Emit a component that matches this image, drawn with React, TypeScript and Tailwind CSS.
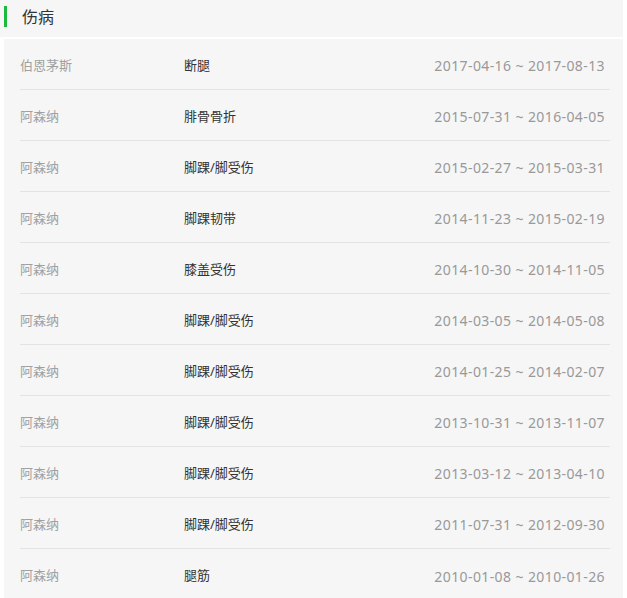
import React from "react";

const rows: [string, string, string][] = [
  ["伯恩茅斯", "断腿", "2017-04-16 ~ 2017-08-13"],
  ["阿森纳", "腓骨骨折", "2015-07-31 ~ 2016-04-05"],
  ["阿森纳", "脚踝/脚受伤", "2015-02-27 ~ 2015-03-31"],
  ["阿森纳", "脚踝韧带", "2014-11-23 ~ 2015-02-19"],
  ["阿森纳", "膝盖受伤", "2014-10-30 ~ 2014-11-05"],
  ["阿森纳", "脚踝/脚受伤", "2014-03-05 ~ 2014-05-08"],
  ["阿森纳", "脚踝/脚受伤", "2014-01-25 ~ 2014-02-07"],
  ["阿森纳", "脚踝/脚受伤", "2013-10-31 ~ 2013-11-07"],
  ["阿森纳", "脚踝/脚受伤", "2013-03-12 ~ 2013-04-10"],
  ["阿森纳", "脚踝/脚受伤", "2011-07-31 ~ 2012-09-30"],
  ["阿森纳", "腿筋", "2010-01-08 ~ 2010-01-26"],
];

export default function App() {
  return (
    <div
      className="w-[627px] h-[598px] bg-white overflow-hidden"
      style={{ fontFamily: '"Noto Sans", "Noto Sans CJK SC", sans-serif' }}
    >
      <div className="w-[623px] h-[37px] bg-[#f6f6f6] flex items-center">
        <div className="ml-[4px] w-[3px] h-[21px] bg-[#1db93c] -mt-[4px]" />
        <div className="ml-[15px] text-[16px] text-[#333] -mt-[3px]">伤病</div>
      </div>
      <div className="mt-[2px] ml-[4px] w-[619px] bg-[#f6f6f6] pl-[16px] pr-[13px]">
        {rows.map((r, i) => (
          <div
            key={i}
            className={`flex items-center h-[51px] pt-[3px] ${i < rows.length - 1 ? "border-b border-[#e3e3e3]" : ""}`}
          >
            <div className="w-[164px] text-[13px] text-[#a0a0a0]">{r[0]}</div>
            <div className="flex-1 text-[13px] text-[#333]">{r[1]}</div>
            <div className="pr-[5px] text-[14px] tracking-[0.4px] text-[#999]">{r[2]}</div>
          </div>
        ))}
      </div>
    </div>
  );
}
